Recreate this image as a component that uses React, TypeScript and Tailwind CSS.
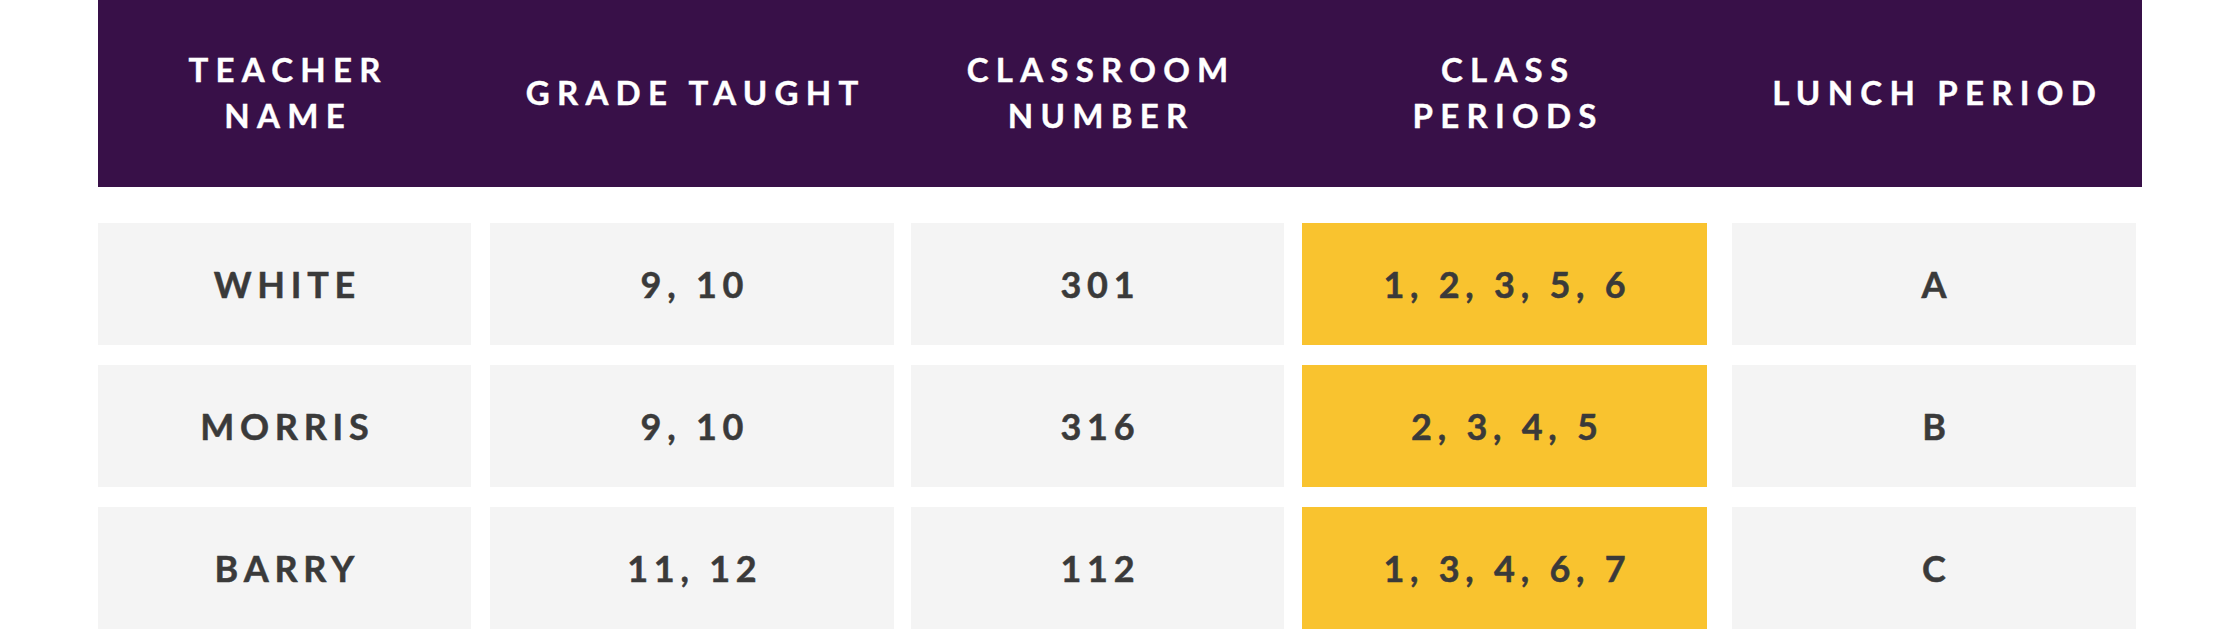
import React from 'react';

interface Column {
  key: string;
  lines: string[];
  cellClass: string;
}

const columns: Column[] = [
  { key: 'name', lines: ['TEACHER', 'NAME'], cellClass: 'w-[373px]' },
  { key: 'grade', lines: ['GRADE TAUGHT'], cellClass: 'w-[404px] ml-[19px]' },
  { key: 'room', lines: ['CLASSROOM', 'NUMBER'], cellClass: 'w-[373px] ml-[17px]' },
  { key: 'periods', lines: ['CLASS', 'PERIODS'], cellClass: 'w-[405px] ml-[18px]' },
  { key: 'lunch', lines: ['LUNCH PERIOD'], cellClass: 'w-[404px] ml-[25px]' },
];

const rows = [
  { name: 'WHITE', grade: '9, 10', room: '301', periods: '1, 2, 3, 5, 6', lunch: 'A' },
  { name: 'MORRIS', grade: '9, 10', room: '316', periods: '2, 3, 4, 5', lunch: 'B' },
  { name: 'BARRY', grade: '11, 12', room: '112', periods: '1, 3, 4, 6, 7', lunch: 'C' },
];

type Row = (typeof rows)[number];

const App: React.FC = () => {
  return (
    <div className="w-full h-[630px] overflow-hidden bg-white font-['Lato','Noto_Sans',sans-serif]">
      <div className="mx-auto w-[2044px]">
        {/* header band */}
        <div className="flex h-[187px] bg-[#381048] text-white">
          {columns.map((col) => (
            <div
              key={col.key}
              className={`${col.cellClass} flex flex-col items-center justify-center pb-[4px] text-[33px] font-bold leading-[46px] tracking-[0.22em] [-webkit-text-stroke:0.4px_currentColor]`}
            >
              {col.lines.map((line) => (
                <span key={line} className="pl-[0.22em]">{line}</span>
              ))}
            </div>
          ))}
        </div>

        {/* body rows */}
        <div className="mt-[36px] flex flex-col gap-[20px]">
          {rows.map((row) => (
            <div key={row.name} className="flex h-[122px]">
              {columns.map((col) => (
                <div
                  key={col.key}
                  className={`${col.cellClass} flex items-center justify-center text-[36px] font-bold tracking-[0.16em] text-[#3a3a3a] [-webkit-text-stroke:0.5px_currentColor] ${
                    col.key === 'periods' ? 'bg-[#f9c32f]' : 'bg-[#f4f4f4]'
                  }`}
                >
                  <span className="pl-[0.16em]">{row[col.key as keyof Row]}</span>
                </div>
              ))}
            </div>
          ))}
        </div>
      </div>
    </div>
  );
};

export default App;
